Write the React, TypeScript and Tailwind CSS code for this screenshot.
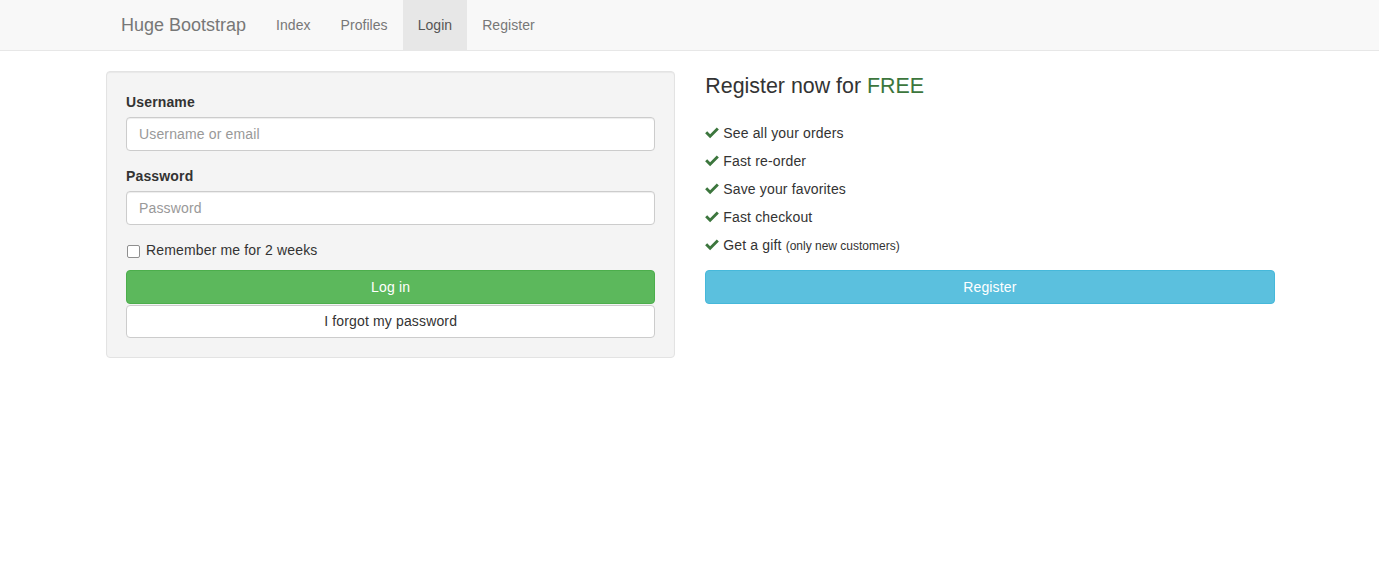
import React from 'react';

const font = { fontFamily: '"Liberation Sans", Arial, sans-serif' };

const Check: React.FC = () => (
  <svg viewBox="0 0 16 14" className="w-[14px] h-[12px] mr-[4px] inline-block shrink-0" fill="#3c763d">
    <path d="M0 7.4 L2.4 5 L5.8 8.4 L13.6 0.6 L16 3 L5.8 13.2 Z" />
  </svg>
);

const perks: React.ReactNode[] = [
  'See all your orders',
  'Fast re-order',
  'Save your favorites',
  'Fast checkout',
  <>
    Get a gift <small className="text-[12px] tracking-normal">(only new customers)</small>
  </>,
];

export default function App() {
  return (
    <div className="min-h-screen bg-white text-[14px] tracking-[0.15px] text-[#333]" style={font}>
      {/* Navbar */}
      <nav className="h-[51px] bg-[#f8f8f8] border-b border-[#e7e7e7]">
        <div className="w-[1170px] mx-auto flex h-[50px] pl-[1.5px]">
          <a className="px-[15px] h-[50px] flex items-center text-[18px] tracking-normal text-[#777]">Huge Bootstrap</a>
          <ul className="flex tracking-[0.05px]">
            <li><a className="px-[15px] h-[50px] flex items-center text-[#777]">Index</a></li>
            <li><a className="px-[15px] h-[50px] flex items-center text-[#777]">Profiles</a></li>
            <li><a className="px-[15px] h-[50px] flex items-center text-[#555] bg-[#e7e7e7]">Login</a></li>
            <li><a className="px-[15px] h-[50px] flex items-center text-[#777]">Register</a></li>
          </ul>
        </div>
      </nav>

      <div className="w-[1170px] mx-auto mt-[20px] flex gap-[30px] pl-[1.5px]">
        {/* Login well */}
        <div className="w-[570px] bg-[#f4f4f4] border border-[#e3e3e3] rounded-[4px] px-[19px] pt-[20px] pb-[19px] shadow-[inset_0_1px_1px_rgba(0,0,0,0.05)]">
          <div className="mb-[15px]">
            <label className="block font-bold mb-[5px] leading-[20px]">Username</label>
            <input
              placeholder="Username or email"
              className="w-full h-[34px] px-[12px] bg-white border border-[#ccc] rounded-[4px] text-[14px] tracking-[0.15px] placeholder:text-[#999] shadow-[inset_0_1px_1px_rgba(0,0,0,0.075)] outline-none"
            />
          </div>
          <div className="mb-[15px]">
            <label className="block font-bold mb-[5px] leading-[20px]">Password</label>
            <input
              placeholder="Password"
              type="password"
              className="w-full h-[34px] px-[12px] bg-white border border-[#ccc] rounded-[4px] text-[14px] tracking-[0.15px] placeholder:text-[#999] shadow-[inset_0_1px_1px_rgba(0,0,0,0.075)] outline-none"
            />
          </div>
          <label className="flex items-center leading-[20px] mt-[15px] mb-[10px]">
            <span className="w-[13px] h-[13px] border border-[#8f8f8f] rounded-[2px] bg-white mx-[1px] mr-[6px] mt-[2px]" />
            Remember me for 2 weeks
          </label>
          <button className="w-full h-[34px] bg-[#5cb85c] border border-[#4cae4c] rounded-[4px] text-white">
            Log in
          </button>
          <button className="w-full h-[33px] mt-px bg-white border border-[#ccc] rounded-[4px] text-[#333]">
            I forgot my password
          </button>
        </div>

        {/* Register */}
        <div className="w-[570px]">
          <h3 className="text-[21.4px] leading-[26px] tracking-normal text-[#333] mt-[2px]">
            Register now for <span className="text-[#3c763d]">FREE</span>
          </h3>
          <ul className="mt-[20px] mb-[11px]">
            {perks.map((p, i) => (
              <li key={i} className="flex items-center h-[28px]">
                <Check />
                <span>{p}</span>
              </li>
            ))}
          </ul>
          <button className="w-full h-[34px] bg-[#5bc0de] border border-[#46b8da] rounded-[4px] text-white">
            Register
          </button>
        </div>
      </div>
    </div>
  );
}
